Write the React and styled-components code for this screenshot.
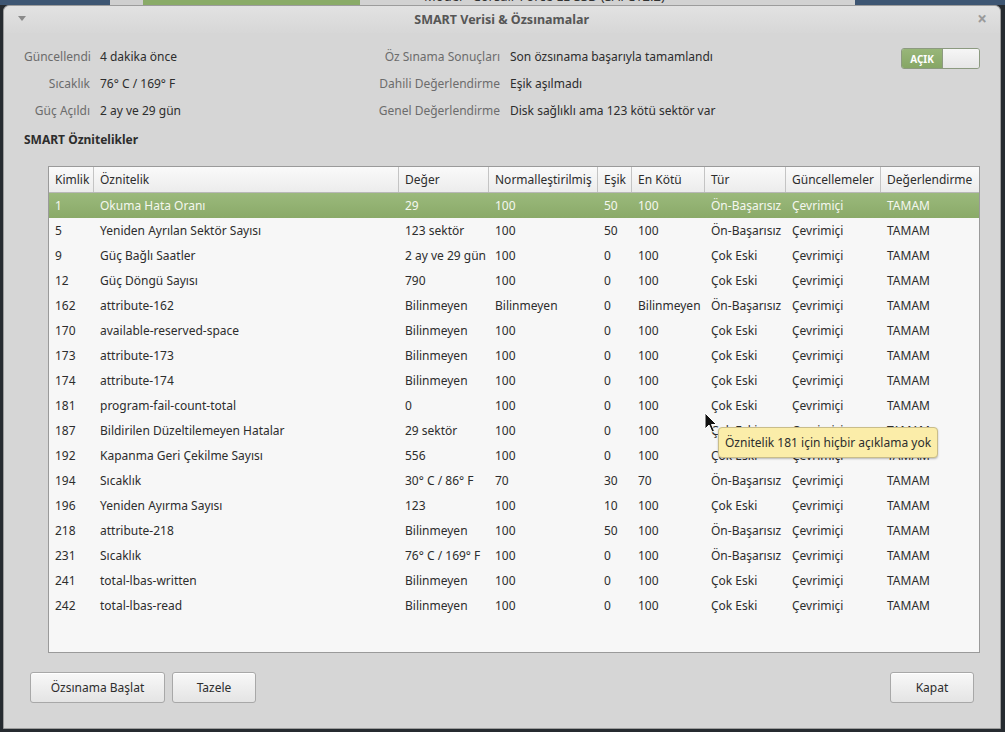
import React from 'react';
import styled, { createGlobalStyle } from 'styled-components';

const GlobalStyle = createGlobalStyle`
  html, body {
    margin: 0;
    padding: 0;
    background: #2b3035;
  }
  body {
    font-family: 'Noto Sans', 'Open Sans', sans-serif;
    font-size: 12px;
    color: #2d2d2d;
  }
`;

const Desktop = styled.div`
  width: 1005px;
  height: 732px;
  display: flex;
  flex-direction: column;
  overflow: hidden;
  background: #262b30;
`;

const BackStrip = styled.div`
  height: 5px;
  display: flex;
  overflow: hidden;
`;

const StripBlock = styled.div`
  width: ${(p) => p.w}px;
  flex: ${(p) => (p.grow ? 1 : 'none')};
  background: ${(p) => p.bg};
  overflow: hidden;
`;

const StripText = styled.div`
  margin-top: -11px;
  margin-left: ${(p) => p.ml}px;
  font-size: 13px;
  line-height: 15px;
  white-space: nowrap;
  color: ${(p) => p.c};
`;

const Window = styled.div`
  position: relative;
  margin: 0 4px 3px 3px;
  flex: 1;
  display: flex;
  flex-direction: column;
  background: #d6d6d6;
  border: 1px solid #9c9c9c;
  border-radius: 6px 6px 0 0;
`;

const TitleBar = styled.div`
  height: 27px;
  display: flex;
  align-items: center;
  padding: 0 13px 0 14px;
  border-radius: 6px 6px 0 0;
  background: linear-gradient(#e2e2e2, #d7d7d7);
`;

const MenuArrow = styled.div`
  width: 0;
  height: 0;
  border-left: 4px solid transparent;
  border-right: 4px solid transparent;
  border-top: 5px solid #8a8a8a;
  margin-top: -2px;
`;

const Title = styled.div`
  flex: 1;
  text-align: center;
  font-weight: bold;
  font-size: 12.5px;
  color: #565656;
`;

const CloseMark = styled.div`
  font-size: 17px;
  font-weight: bold;
  color: #9a9a9a;
  line-height: 1;
  margin-top: -3px;
`;

const Head = styled.div`
  display: flex;
  align-items: flex-start;
  padding: 10px 20px 0 20px;
`;

const InfoGrid = styled.div`
  display: grid;
  grid-template-columns: 66px 200px 190px 300px;
  grid-auto-rows: 27px;
  column-gap: 10px;
  align-items: center;
`;

const Label = styled.div`
  text-align: right;
  color: #6c6c6c;
  white-space: nowrap;
`;

const Value = styled.div`
  color: #2d2d2d;
  white-space: nowrap;
`;

const Toggle = styled.div`
  margin-left: auto;
  margin-top: 5px;
  width: 77px;
  height: 19px;
  display: flex;
  border: 1px solid #8c9a80;
  border-radius: 3px;
  overflow: hidden;
`;

const ToggleOn = styled.div`
  width: 40px;
  display: flex;
  align-items: center;
  justify-content: center;
  background: linear-gradient(#98b679, #86a665);
  color: #fff;
  font-weight: bold;
  font-size: 10px;
  border-right: 1px solid #8c9a80;
`;

const ToggleKnob = styled.div`
  flex: 1;
  background: linear-gradient(#f6f6f6, #e6e6e6);
`;

const Section = styled.div`
  padding: 2px 20px 0 20px;
  height: 26px;
  display: flex;
  align-items: center;
  font-weight: bold;
  color: #2d2d2d;
`;

const TableBox = styled.div`
  margin: 14px 20px 0 44px;
  height: 485px;
  background: #f7f7f7;
  border: 1px solid #9a9a9a;
  overflow: hidden;
`;

const cols = '45px 305px 90px 109px 34px 73px 81px 95px 98px';

const HeaderRow = styled.div`
  display: grid;
  grid-template-columns: ${cols};
  height: 25px;
  background: linear-gradient(#fafafa, #ececec);
  border-bottom: 1px solid #b8b8b8;
`;

const HeadCell = styled.div`
  display: flex;
  align-items: center;
  padding-left: 6px;
  border-right: ${(p) => (p.last ? 'none' : '1px solid #c4c4c4')};
  color: #2d2d2d;
  white-space: nowrap;
  overflow: hidden;
`;

const Row = styled.div`
  display: grid;
  grid-template-columns: ${cols};
  height: 25px;
  background: ${(p) => (p.selected ? 'linear-gradient(#9bb97c, #8aaa68)' : 'transparent')};
  color: ${(p) => (p.selected ? '#f4f7ef' : '#2d2d2d')};
`;

const Cell = styled.div`
  display: flex;
  align-items: center;
  padding-left: 6px;
  white-space: nowrap;
  overflow: hidden;
`;

const Footer = styled.div`
  display: flex;
  gap: 7px;
  padding: 19px 26px 0 26px;
`;

const Button = styled.button`
  height: 31px;
  width: ${(p) => p.w}px;
  margin-left: ${(p) => (p.push ? 'auto' : '0')};
  font-family: inherit;
  font-size: 12px;
  color: #2d2d2d;
  background: linear-gradient(#f8f8f8, #e4e4e4);
  border: 1px solid #a8a8a8;
  border-radius: 3px;
  box-shadow: inset 0 1px 0 #fff;
`;

const Tooltip = styled.div`
  position: absolute;
  left: 714px;
  top: 421px;
  height: 29px;
  padding: 0 6px;
  display: flex;
  align-items: center;
  background: #fbeda9;
  border: 1px solid #c9bd8a;
  border-radius: 4px;
  box-shadow: 0 1px 2px rgba(0, 0, 0, 0.25);
  color: #2d2d2d;
  white-space: nowrap;
`;

const Cursor = styled.svg`
  position: absolute;
  left: 700px;
  top: 406px;
`;

const headers = [
  'Kimlik', 'Öznitelik', 'Değer', 'Normalleştirilmiş', 'Eşik',
  'En Kötü', 'Tür', 'Güncellemeler', 'Değerlendirme'
];

const PF = 'Ön-Başarısız';
const OLD = 'Çok Eski';
const UNK = 'Bilinmeyen';

const rows = [
  ['1', 'Okuma Hata Oranı', '29', '100', '50', '100', PF],
  ['5', 'Yeniden Ayrılan Sektör Sayısı', '123 sektör', '100', '50', '100', PF],
  ['9', 'Güç Bağlı Saatler', '2 ay ve 29 gün', '100', '0', '100', OLD],
  ['12', 'Güç Döngü Sayısı', '790', '100', '0', '100', OLD],
  ['162', 'attribute-162', UNK, UNK, '0', UNK, PF],
  ['170', 'available-reserved-space', UNK, '100', '0', '100', OLD],
  ['173', 'attribute-173', UNK, '100', '0', '100', OLD],
  ['174', 'attribute-174', UNK, '100', '0', '100', OLD],
  ['181', 'program-fail-count-total', '0', '100', '0', '100', OLD],
  ['187', 'Bildirilen Düzeltilemeyen Hatalar', '29 sektör', '100', '0', '100', OLD],
  ['192', 'Kapanma Geri Çekilme Sayısı', '556', '100', '0', '100', OLD],
  ['194', 'Sıcaklık', '30° C / 86° F', '70', '30', '70', PF],
  ['196', 'Yeniden Ayırma Sayısı', '123', '100', '10', '100', OLD],
  ['218', 'attribute-218', UNK, '100', '50', '100', PF],
  ['231', 'Sıcaklık', '76° C / 169° F', '100', '0', '100', PF],
  ['241', 'total-lbas-written', UNK, '100', '0', '100', OLD],
  ['242', 'total-lbas-read', UNK, '100', '0', '100', OLD]
];

export default function App() {
  return (
    <Desktop>
      <GlobalStyle />
      <BackStrip>
        <StripBlock w={110} bg="#3e5673" />
        <StripBlock w={33} bg="#cfcfcf" />
        <StripBlock w={217} bg="#8aab68" />
        <StripBlock grow bg="#d2d2d2">
          <StripText ml={64} c="#333">Model&nbsp;&nbsp;&nbsp;Corsair Force LE SSD (SAFC12.2)</StripText>
        </StripBlock>
        <StripBlock w={150} bg="#3e5673" />
      </BackStrip>
      <Window>
        <TitleBar>
          <MenuArrow />
          <Title>SMART Verisi &amp; Özsınamalar</Title>
          <CloseMark>×</CloseMark>
        </TitleBar>
        <Head>
          <InfoGrid>
            <Label>Güncellendi</Label>
            <Value>4 dakika önce</Value>
            <Label>Öz Sınama Sonuçları</Label>
            <Value>Son özsınama başarıyla tamamlandı</Value>
            <Label>Sıcaklık</Label>
            <Value>76° C / 169° F</Value>
            <Label>Dahili Değerlendirme</Label>
            <Value>Eşik aşılmadı</Value>
            <Label>Güç Açıldı</Label>
            <Value>2 ay ve 29 gün</Value>
            <Label>Genel Değerlendirme</Label>
            <Value>Disk sağlıklı ama 123 kötü sektör var</Value>
          </InfoGrid>
          <Toggle>
            <ToggleOn>AÇIK</ToggleOn>
            <ToggleKnob />
          </Toggle>
        </Head>
        <Section>SMART Öznitelikler</Section>
        <TableBox>
          <HeaderRow>
            {headers.map((h, i) => (
              <HeadCell key={h} last={i === headers.length - 1}>
                {h}
              </HeadCell>
            ))}
          </HeaderRow>
          {rows.map((r, i) => (
            <Row key={r[0]} selected={i === 0}>
              {[...r, 'Çevrimiçi', 'TAMAM'].map((v, j) => (
                <Cell key={j}>{v}</Cell>
              ))}
            </Row>
          ))}
        </TableBox>
        <Footer>
          <Button w={135}>Özsınama Başlat</Button>
          <Button w={84}>Tazele</Button>
          <Button w={84} push>Kapat</Button>
        </Footer>
        <Cursor width="14" height="22" viewBox="0 0 14 22">
          <path d="M1 1 L1 17 L5 13 L8 20 L10.5 19 L7.5 12.5 L12.5 12.5 Z" fill="#111" stroke="#fff" strokeWidth="1" strokeLinejoin="round" />
        </Cursor>
        <Tooltip>Öznitelik 181 için hiçbir açıklama yok</Tooltip>
      </Window>
    </Desktop>
  );
}
